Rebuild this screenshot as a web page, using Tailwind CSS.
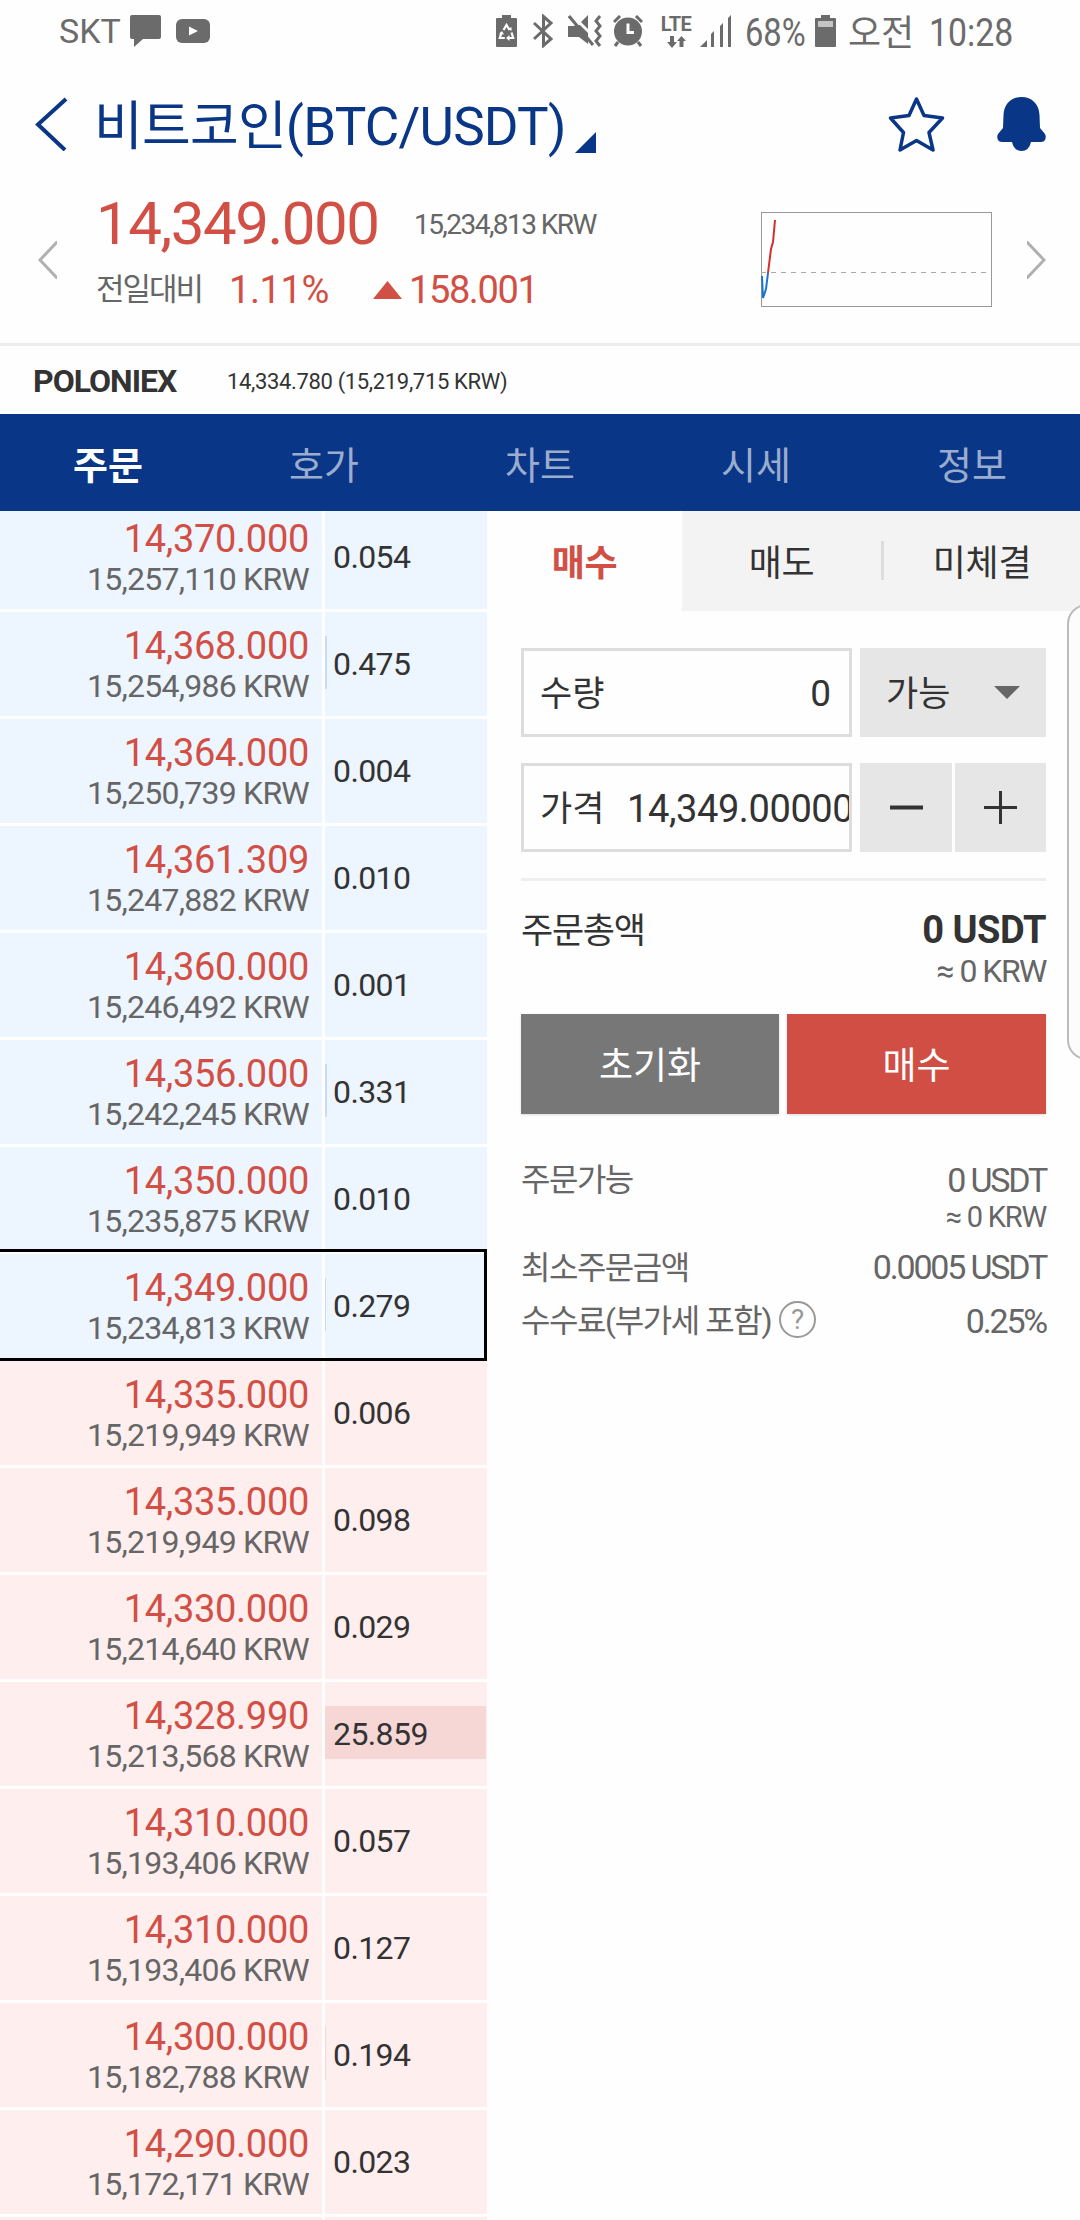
<!DOCTYPE html>
<html lang="ko">
<head>
    <meta charset="UTF-8">
    <meta name="viewport" content="width=device-width, initial-scale=1.0">
    <title>비트코인(BTC/USDT)</title>
    <script src="https://cdn.jsdelivr.net/npm/@tailwindcss/browser@4"></script>
    <style>
        body {
            font-family: Roboto, 'Noto Sans CJK KR', sans-serif;
        }
    </style>
</head>
<body class="bg-[#fefefe] text-[#333] w-[1080px] h-[2220px] overflow-hidden relative whitespace-nowrap">
    <!-- Status bar -->
    <div class="h-[62px] flex items-center justify-between pl-[59px] pr-[65px] text-[#6b6b6b]">
        <div class="flex items-center">
            <span class="text-[34px] leading-[62px] w-[71px]">SKT</span>
            <svg class="w-[31px] h-8" viewBox="0 0 31 32" fill="currentColor"><path d="M2 0h27q2 0 2 2v20q0 2-2 2H13l-9 8v-8H2q-2 0-2-2V2q0-2 2-2z"/></svg>
            <svg class="w-[34px] h-6 ml-[15px]" viewBox="0 0 34 24"><rect width="34" height="24" rx="6" fill="currentColor"/><path d="M13 7.500l9 4.500-9 4.500z" fill="#fff"/></svg>
        </div>
        <div class="flex items-center">
            <!-- battery saver -->
            <svg class="w-[21px] h-8" viewBox="0 0 21 32" fill="none"><path d="M1 3h5V0h9v3h5q1 0 1 1v27q0 1-1 1H1q-1 0-1-1V4q0-1 1-1z" fill="currentColor"/><path d="M7.500 15l3-5 3 5M5.500 17.500L3.800 23h5M15.500 17.500l1.700 5.500h-5" stroke="#fff" stroke-width="2.200"/><path d="M12 14l3.500 2V12zM3 19l3-3 2 3.500zM13.500 20v6l-3.500-3z" fill="#fff"/></svg>
            <!-- bluetooth -->
            <svg class="w-[21px] h-[34px] ml-4" viewBox="0 0 21 34" fill="none" stroke="currentColor" stroke-width="3"><path d="M1 9l17 16-7.500 6.500v-29L18 9 1 25"/></svg>
            <!-- mute + vibrate -->
            <svg class="w-[34px] h-8 ml-[14px]" viewBox="0 0 34 32"><path d="M0 11h5l7-1 8 8v11l-9-7H0zM13 7l7-7v14z" fill="currentColor"/><path d="M1 1l24 29" stroke="currentColor" stroke-width="3"/><path d="M32 1l-4 5 4 5-4 5 4 5-4 5 4 5" fill="none" stroke="currentColor" stroke-width="3"/></svg>
            <!-- alarm -->
            <svg class="w-[30px] h-8 ml-[11px]" viewBox="0 0 30 32"><circle cx="15" cy="16.500" r="14" fill="currentColor"/><path d="M1 7l6-6M29 7l-6-6M5 27l-3 4M25 27l3 4" stroke="currentColor" stroke-width="3"/><path d="M15 8.500v9h6" fill="none" stroke="#fff" stroke-width="3"/></svg>
            <!-- LTE -->
            <div class="ml-4 w-[34px] flex flex-col items-center">
                <span class="text-[20px] leading-[18px] font-bold tracking-[-0.6px]">LTE</span>
                <svg class="w-[19px] h-3 mt-[3px]" viewBox="0 0 19 12" fill="currentColor"><path d="M3 0h4v6h3l-5 6-5-6h3zM12.500 11h4V5h2.500l-4.500-5-4.500 5h2.500z"/></svg>
            </div>
            <!-- signal -->
            <svg class="w-[32px] h-8 ml-[7px]" viewBox="0 0 32 32" fill="currentColor"><path d="M0 32l7-7v7zM11 19l3-3v16h-3zM20 11l3-3v24h-3zM28 3l3-3v32h-3z"/></svg>
            <span class="w-[63px] ml-[13px] pt-1 text-[38px] leading-[62px] origin-left scale-x-[0.86]">68%</span>
            <svg class="w-[21px] h-8 ml-[7px]" viewBox="0 0 21 32"><path d="M1 3h5V0h9v3h5q1 0 1 1v27q0 1-1 1H1q-1 0-1-1V4q0-1 1-1z" fill="currentColor"/><path d="M3 6h15v6H3z" fill="#c4c4c4"/></svg>
            <span class="ml-[12px] w-[81px] pt-[5px] text-[36px] leading-[62px]">오전</span>
            <span class="w-[86px] pt-1 text-[38px] leading-[62px] origin-left scale-x-[0.89]">10:28</span>
        </div>
    </div>

    <!-- Header -->
    <header class="h-[124px] flex items-center justify-between pl-[35px] pr-[34px] text-[#0a3687]">
        <div class="flex items-center">
            <svg class="w-[33px] h-[54px]" viewBox="0 0 33 54" fill="none" stroke="currentColor" stroke-width="4"><path d="M31 2L3 27.500 30 53"/></svg>
            <h1 class="ml-[26px] w-[470px] pt-[6px] text-[53px] leading-[60px] tracking-[-0.8px]">비트코인(BTC/USDT)</h1>
            <svg class="w-[21px] h-[21px] ml-[11px] mt-9" viewBox="0 0 21 21" fill="currentColor"><path d="M21 0v21H0z"/></svg>
        </div>
        <div class="flex items-center gap-[52px]">
            <svg class="w-[57px] h-[56px]" viewBox="0 0 57 56" fill="none" stroke="currentColor" stroke-width="3.500" stroke-linejoin="round"><path d="M28.500 3l7.500 16.500 18.500 2.500-13.500 14.500 4 17.500-16.500-9.500-16.500 9.500 3.500-17.500L2.500 22l18.500-2.500z"/></svg>
            <svg class="w-[49px] h-[54px]" viewBox="0 0 49 54" fill="currentColor"><path d="M24.500 0C35 0 42 7 42.500 18L43 31l5 6q1.500 3 0 6-1 2-4 2H34q-2 9-9.500 9T15 45H5q-3 0-4-2-1.500-3 0-6l5-6 .5-13C7 7 14 0 24.500 0z"/></svg>
        </div>
    </header>

    <!-- Quote -->
    <section class="h-[160px] flex items-center pl-[38px] pr-[34px] pb-[10px] border-b-3 border-[#ededed]">
        <svg class="w-[19px] h-[38px]" viewBox="0 0 19 38" fill="none" stroke="#b0b0b0" stroke-width="3"><path d="M20 0L2 19l18 19"/></svg>
        <div class="ml-[39px] w-[665px] pb-[9px]">
            <div class="flex items-center h-[70px]">
                <span class="w-[318px] text-[60px] leading-[70px] tracking-[-1.5px] text-[#d24f45]">14,349.000</span>
                <span class="text-[28px] tracking-[-1.55px] text-[#666] pt-[2px]">15,234,813 KRW</span>
            </div>
            <div class="flex items-center h-[63px] text-[38px] text-[#d24f45]">
                <span class="w-[133px] text-[31px] tracking-[-2px] text-[#666]">전일대비</span>
                <span class="w-[144px] tracking-[-0.4px]">1.11%</span>
                <svg class="w-[29px] h-[18px]" viewBox="0 0 29 18" fill="currentColor"><path d="M14.500 0L29 18H0z"/></svg>
                <span class="ml-[7px] tracking-[-1.4px]">158.001</span>
            </div>
        </div>
        <svg class="w-[231px] h-[95px]" viewBox="0 0 231 95" fill="none">
            <rect x=".5" y=".5" width="230" height="94" stroke="#999"/>
            <path d="M0 60.500h226" stroke="#aaa" stroke-dasharray="5 5"/>
            <path d="M1 64l1 22 3-9 2-16" stroke="#1976d2" stroke-width="2"/>
            <path d="M7 61l3-24 2-7 2-22" stroke="#d32f2f" stroke-width="2"/>
        </svg>
        <svg class="w-[19px] h-[38px] ml-[35px]" viewBox="0 0 19 38" fill="none" stroke="#b0b0b0" stroke-width="3"><path d="M-1 0l18 19-18 19"/></svg>
    </section>

    <!-- Exchange -->
    <div class="h-[68px] flex items-center pl-[33px] pt-[2px]">
        <span class="w-[194px] text-[32px] font-bold tracking-[-1px]">POLONIEX</span>
        <span class="text-[22px] tracking-[-0.35px]">14,334.780 (15,219,715 KRW)</span>
    </div>

    <!-- Tabs -->
    <nav class="h-[97px] bg-[#0a3687] text-white/60 grid grid-cols-5 text-center text-[38px] leading-[104px]">
        <a href="#" class="text-white font-bold">주문</a>
        <a href="#">호가</a>
        <a href="#">차트</a>
        <a href="#">시세</a>
        <a href="#">정보</a>
    </nav>

    <main class="flex h-[1709px]">
        <!-- Order book -->
        <div class="w-[487px] h-full overflow-hidden">
            <div id="orderBook" class="-mt-[6px] flex flex-col"></div>
        </div>

        <!-- Order form -->
        <div class="flex-1">
            <div class="h-[100px] flex text-center text-[36px] leading-[106px] tracking-[-0.3px]">
                <div class="w-[195px] font-bold text-[#d24f45]">매수</div>
                <div class="w-[199px] bg-[#f3f3f3]">매도</div>
                <div class="flex-1 bg-[#f3f3f3] flex"><span class="w-[3px] h-[39px] mt-[30px] bg-[#ddd]"></span><span class="flex-1">미체결</span></div>
            </div>

            <div class="pl-[34px] pr-[34px] pt-[37px]">
                <div class="flex h-[89px] text-[35px]">
                    <div class="w-[331px] border-3 border-[#ddd] flex items-center justify-between pl-4 pr-[18px]">
                        <span class="pt-[6px]">수량</span><span class="text-[37px] pt-[3px]">0</span>
                    </div>
                    <div class="w-[186px] ml-2 bg-[#e6e6e6] flex items-center justify-between pl-[26px] pr-[26px]">
                        <span class="pt-[6px]">가능</span>
                        <svg class="w-[26px] h-[13px]" viewBox="0 0 26 13" fill="#666"><path d="M0 0h26L13 13z"/></svg>
                    </div>
                </div>
                <div class="flex h-[89px] mt-[26px] text-[35px]">
                    <div class="w-[331px] border-3 border-[#ddd] flex items-center pl-4 overflow-hidden">
                        <span class="w-[87px] shrink-0 pt-[6px]">가격</span><span class="text-[38px] tracking-[-0.4px] pt-1">14,349.00000</span>
                    </div>
                    <div class="w-[92px] ml-2 bg-[#e6e6e6] flex items-center justify-center">
                        <svg class="w-[33px] h-[33px]" viewBox="0 0 33 33"><path d="M0 16.500h33" stroke="#333" stroke-width="4"/></svg>
                    </div>
                    <div class="w-[91px] ml-[3px] bg-[#e6e6e6] flex items-center justify-center">
                        <svg class="w-[33px] h-[33px]" viewBox="0 0 33 33"><path d="M0 16.500h33M16.500 0v33" stroke="#333" stroke-width="3"/></svg>
                    </div>
                </div>

                <div class="mt-[26px] h-[133px] border-t-3 border-[#eee] pt-[27px] flex justify-between">
                    <span class="text-[35px] leading-[48px] tracking-[-1.3px]">주문총액</span>
                    <div class="text-right">
                        <div class="text-[38px] leading-[44px] font-bold tracking-[-0.5px]">0 USDT</div>
                        <div class="text-[32px] leading-[38px] tracking-[-1.5px] text-[#666]">≈ 0 KRW</div>
                    </div>
                </div>

                <div class="flex gap-2 h-[100px] mt-[3px] text-center text-white text-[37px]">
                    <button class="w-[258px] pt-[6px] bg-[#777] shadow">초기화</button>
                    <button class="flex-1 pt-[6px] bg-[#d14e44] shadow">매수</button>
                </div>

                <div class="mt-[45px] text-[#666] text-[34px] leading-[43px] tracking-[-2.2px]">
                    <div class="flex justify-between h-[87px]">
                        <span class="text-[32px] tracking-[-1.5px]">주문가능</span>
                        <div class="text-right">
                            <div>0 USDT</div>
                            <div class="text-[29px] leading-[31px] tracking-[-1.2px]">≈ 0 KRW</div>
                        </div>
                    </div>
                    <div class="flex justify-between h-[54px]">
                        <span class="text-[32px] leading-[44px] tracking-[-1.5px]">최소주문금액</span>
                        <span>0.0005 USDT</span>
                    </div>
                    <div class="flex justify-between">
                        <div class="flex">
                            <span class="text-[32px] tracking-[-1.4px]">수수료(부가세 포함)</span>
                            <span class="ml-[8px] mt-[1px] size-[37px] rounded-full border-2 border-[#999] text-[#999] text-[28px] leading-[34px] tracking-normal text-center">?</span>
                        </div>
                        <span>0.25%</span>
                    </div>
                </div>
            </div>
        </div>
    </main>

    <!-- Edge panel handle -->
    <div class="absolute left-[1067px] top-[604px] w-[40px] h-[456px] rounded-[20px] border-2 border-[#bbb] bg-[#fcfcfc]"></div>

    <script>
        const asks = [
            ['14,370.000', '15,257,110', '0.054'],
            ['14,368.000', '15,254,986', '0.475'],
            ['14,364.000', '15,250,739', '0.004'],
            ['14,361.309', '15,247,882', '0.010'],
            ['14,360.000', '15,246,492', '0.001'],
            ['14,356.000', '15,242,245', '0.331'],
            ['14,350.000', '15,235,875', '0.010'],
            ['14,349.000', '15,234,813', '0.279'],
        ];
        const bids = [
            ['14,335.000', '15,219,949', '0.006'],
            ['14,335.000', '15,219,949', '0.098'],
            ['14,330.000', '15,214,640', '0.029'],
            ['14,328.990', '15,213,568', '25.859'],
            ['14,310.000', '15,193,406', '0.057'],
            ['14,310.000', '15,193,406', '0.127'],
            ['14,300.000', '15,182,788', '0.194'],
            ['14,290.000', '15,172,171', '0.023'],
        ];
        const current = '14,349.000';
        const maxVolume = 25.859;

        function row([price, krw, volume], cellBg, barBg) {
            const bar = Math.floor(volume / maxVolume * 161);
            // outline of the current price covers the gaps around its row
            const outline = price === current ? '<div class="absolute left-[-3px] right-0 top-[-5px] bottom-0 border-3 border-black"></div>' : '';
            return `
                <div class="relative h-[107px] pb-[3px] flex gap-[3px]">
                    <div class="w-[322px] ${cellBg} pt-[14px] pr-[13px] text-right">
                        <div class="text-[38px] leading-[41px] tracking-[-0.3px] text-[#d24f45]">${price}</div>
                        <div class="text-[32px] leading-[38px] tracking-[-0.75px] text-[#666]">${krw} KRW</div>
                    </div>
                    <div class="relative flex-1 ${cellBg} pl-2">
                        <div class="absolute left-0 top-[24px] h-[53px] ${barBg}" style="width: ${bar}px"></div>
                        <span class="relative text-[32px] leading-[104px] tracking-[-0.6px]">${volume}</span>
                    </div>
                    ${outline}
                </div>`;
        }

        // top edge of the next row, still scrolled out of view
        const nextRow = '<div class="h-[107px] flex gap-[3px]"><div class="w-[322px] bg-[#ffeeee]"></div><div class="flex-1 bg-[#ffeeee]"></div></div>';

        document.getElementById('orderBook').innerHTML =
            asks.map(r => row(r, 'bg-[#edf5ff]', 'bg-[#c9dcf5]')).join('') +
            bids.map(r => row(r, 'bg-[#ffeeee]', 'bg-[#f6d7d6]')).join('') + nextRow;
    </script>
</body>
</html>
